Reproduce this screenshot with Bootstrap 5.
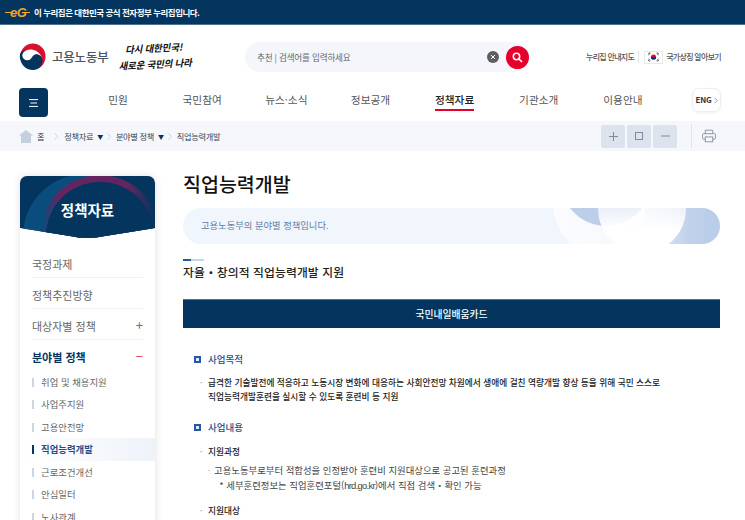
<!DOCTYPE html>
<html lang="ko">
<head>
  <meta charset="UTF-8" />
  <meta name="viewport" content="width=device-width, initial-scale=1.0" />
  <title>직업능력개발 | 고용노동부</title>
  <link href="https://cdn.jsdelivr.net/npm/bootstrap@5.3.0/dist/css/bootstrap.min.css" rel="stylesheet" />
  <style>
    html, body { height: 520px; overflow: hidden; }
    body {
      font-family: "Noto Sans CJK KR", "Noto Sans", sans-serif;
      color: #222;
      background: #fff;
      letter-spacing: -0.2px;
    }
    .gov-bar {
      height: 25px;
      background: #03355f;
      border-bottom: 1px solid #4d7193;
      padding-left: 5px;
      color: #fff;
      font-size: 8.5px;
      font-weight: 700;
      letter-spacing: -0.5px;
    }
    .top-head { height: 63px; padding: 18px 24px 0 19px; }
    .ministry { font-size: 12.5px; color: #4b5560; font-weight: 500; letter-spacing: -0.2px; margin-left: 6px; width: 56px; white-space: nowrap; }
    .slogan {
      width: 72px;
      margin: -3px 0 0 10px;
      font-size: 9.5px;
      line-height: 16px;
      font-weight: 700;
      font-style: italic;
      color: #111;
      text-align: center;
      white-space: nowrap;
      transform: rotate(-3deg);
    }
    .search-box {
      width: 284px;
      height: 30px;
      margin-left: 55px;
      padding: 0 0 0 12px;
      background: #f4f6fb;
      border-radius: 15px;
      font-size: 8.6px;
      color: #666;
    }
    .clear-btn { width: 12px; height: 12px; background: #5e5e5e; border-radius: 50%; margin-right: 7px; }
    .find-btn { width: 23px; height: 23px; background: #e4002b; border-radius: 50%; margin-right: 0; }
    .util-links { font-size: 8px; font-weight: 500; color: #555; letter-spacing: -0.7px; white-space: nowrap; }
    .util-sep { width: 1px; height: 12px; background: #e4e6ea; margin: 0 5px 0 4px; }
    .flag-box { width: 19px; height: 13px; border: 1px solid #e8e8e8; margin-right: 3px; }
    .nav-row { height: 33px; padding: 0 24px 0 19px; }
    .menu-btn { width: 29px; height: 29px; background: #03355f; border-radius: 4px; flex: none; }
    .main-nav { width: 589px; margin-left: 28px; margin-right: 27px; }
    .main-nav a {
      flex: 1 1 0;
      text-align: center;
      font-size: 10.7px;
      color: #555;
      text-decoration: none;
      letter-spacing: 0;
    }
    .main-nav a span { display: inline-block; height: 23px; line-height: 23px; }
    .main-nav a.on span { color: #222; font-weight: 500; border-bottom: 2px solid #e4002b; }
    .eng-btn {
      width: 29px;
      height: 24px;
      border: 1px solid #eee;
      border-radius: 7px;
      font-size: 8px;
      font-weight: 700;
      color: #333;
      box-shadow: 0 1px 3px rgba(0, 0, 0, .06);
    }
    .crumb-bar {
      height: 30px;
      background: #f5f7fb;
      padding: 0 29px 0 19px;
      font-size: 8.2px;
      color: #39434e;
      letter-spacing: -0.3px;
      white-space: nowrap;
    }
    .crumb-arrow { flex: none; margin: 0 5px 0 4px; }
    .crumb-tri { font-size: 6px; color: #03355f; margin-left: 4px; }
    .zoom-btn { width: 24px; height: 23px; background: #dde3ec; border-radius: 2px; margin-left: 2px; }
    .crumb-sep { width: 1px; height: 24px; background: #e2e6ec; margin: 0 10px 0 14px; }
    .page-wrap { padding: 25px 25px 0 20px; gap: 28px; }
    .side-box {
      width: 135px;
      flex: none;
      background: #fff;
      border-radius: 7px 7px 0 0;
      box-shadow: 0 0 8px rgba(0, 0, 0, .12);
      height: 400px;
    }
    .side-head { height: 62px; position: relative; color: #fff; font-size: 14.5px; font-weight: 700; padding-top: 23px; text-align: center; letter-spacing: 0; }
    .side-head svg { position: absolute; left: 0; top: 0; }
    .side-head span { position: relative; }
    .side-list { padding: 9px 0 0; }
    .side-one {
      margin: 0 12px;
      height: 31px;
      padding-top: 7px;
      font-size: 11px;
      color: #666;
      letter-spacing: 0;
      border-bottom: 1px solid #eff1f4;
      line-height: 20px;
    }
    .side-one.open { border: 0; color: #03355f; font-weight: 700; }
    .side-sub {
      height: 22.5px;
      line-height: 22px;
      padding-left: 12px;
      font-size: 9.4px;
      color: #666;
      letter-spacing: 0;
    }
    .side-sub i { display: inline-block; width: 2px; height: 9px; background: #ccd6e3; margin-right: 7px; vertical-align: -1px; }
    .side-sub.cur { background: linear-gradient(90deg, #fff, #eef3fa); color: #1d4f8c; font-weight: 700; }
    .side-sub.cur i { background: #03355f; }
    .page-main { flex: 1 1 0; min-width: 0; }
    .page-title { font-size: 19.5px; font-weight: 500; color: #111; line-height: 32px; margin: -8px 0 8px; letter-spacing: 0; }
    .intro-band {
      position: relative;
      height: 36px;
      border-radius: 18px;
      overflow: hidden;
      background: #f1f5fc;
      font-size: 9.3px;
      line-height: 34px;
      padding-left: 18px;
      color: #5e7ea6;
      letter-spacing: 0;
    }
    .intro-band svg { position: absolute; right: 0; top: 0; }
    .sec-mark { width: 21px; height: 2px; background: #c5d5ec; margin-top: 15px; }
    .sec-mark i { display: block; width: 8px; height: 2px; background: #2459a8; }
    .sec-title { font-size: 11.8px; font-weight: 500; color: #222; line-height: 18px; margin: 2px 0 18px; letter-spacing: 0.1px; }
    .navy-title {
      height: 29px;
      background: #03355f;
      border-top: 1px solid #4d7193;
      color: #fff;
      font-size: 9.8px;
      font-weight: 500;
      line-height: 28px;
      text-align: center;
      letter-spacing: 0;
    }
    .sq-title { font-size: 9.5px; font-weight: 500; color: #1d4f8c; line-height: 16px; margin-left: 11px; letter-spacing: 0; }
    .sq-title i { display: inline-block; width: 7px; height: 7px; border: 2px solid #2459a8; background: #dfe9f7; margin-right: 7px; }
    .body-lines { position: relative; padding-left: 25px; font-size: 8.7px; line-height: 14px; letter-spacing: 0; }
    .dot-mark { position: absolute; font-size: 8px; color: #999; left: 17px; }
    .body-strong { font-weight: 500; color: #222; }
    .body-plain { color: #444; font-size: 9.4px; }
    .latin-tight { font-family: "Liberation Sans", sans-serif; letter-spacing: -0.7px; }
  </style>
</head>
<body>
  <div class="gov-bar d-flex align-items-center gap-1">
    <svg width="25" height="14" viewBox="0 0 25 14" fill="none" aria-hidden="true">
      <path d="M0 7.5H7M17 7.5H25" stroke="#f0a52b" stroke-width="1.2"/>
      <text x="5" y="11.5" font-family="Liberation Sans, sans-serif" font-size="13" font-style="italic" font-weight="700" fill="#f0a52b">eG</text>
    </svg>
    <span>이 누리집은 대한민국 공식 전자정부 누리집입니다.</span>
  </div>

  <div class="top-head d-flex align-items-start">
    <svg class="flex-none" width="27" height="27" viewBox="0 0 27 27" aria-hidden="true">
      <circle cx="13.5" cy="13.5" r="13.5" fill="#fff"/>
      <path d="M1 17C0 9 5 1 13.5 0.6C21 0.6 27 6.5 26.6 14C26 20 23 24 19 25.5C23 21.5 24.2 16.5 21.5 12C18.5 7.5 12.5 5 7 7.5C3.5 9.5 1.5 13 1 17Z" fill="#d8112d"/>
      <path d="M0.8 13C1 21 6.5 27 14 27C20 27 24 22 23.5 17C23 12.6 19 10.3 15.5 11.7C13 13 12.5 16.3 10 17C7 18 4 16 3.5 13.5C2.8 10.5 5 7.5 7 6.5C3.5 7.7 0.8 9.5 0.8 13Z" fill="#03355f"/>
    </svg>
    <div class="ministry" style="line-height:27px">고용노동부</div>
    <div class="slogan">다시 대한민국!<br>새로운 국민의 나라</div>
    <div class="search-box d-flex align-items-center" style="margin-top:-1px">
      <span class="flex-grow-1">추천 | 검색어를 입력하세요</span>
      <span class="clear-btn d-flex align-items-center justify-content-center">
        <svg width="6" height="6" viewBox="0 0 6 6" aria-hidden="true"><path d="M1 1L5 5M5 1L1 5" stroke="#fff" stroke-width="1"/></svg>
      </span>
      <span class="find-btn d-flex align-items-center justify-content-center">
        <svg width="11" height="11" viewBox="0 0 11 11" fill="none" aria-hidden="true"><circle cx="4.5" cy="4.5" r="3.2" stroke="#fff" stroke-width="1.5"/><path d="M7 7L10 10" stroke="#fff" stroke-width="1.6"/></svg>
      </span>
    </div>
    <div class="util-links d-flex align-items-center ms-auto" style="height:28px">
      <span>누리집 안내지도</span>
      <span class="util-sep"></span>
      <span class="flag-box d-flex align-items-center justify-content-center">
        <svg width="13" height="10" viewBox="0 0 13 10" aria-hidden="true">
          <circle cx="6.5" cy="5" r="2.6" fill="#d8112d"/><path d="M3.9 5a2.6 2.6 0 0 0 5.2 0z" fill="#03358f"/>
          <path d="M1 2L3 .6M1.5 3L3.4 1.4M10 .6L12 2M9.6 1.4L11.5 3M1 8L3 9.4M1.5 7L3.4 8.6M10 9.4L12 8M9.6 8.6L11.5 7" stroke="#222" stroke-width=".7"/>
        </svg>
      </span>
      <span>국가상징 알아보기</span>
    </div>
  </div>

  <div class="nav-row d-flex align-items-start">
    <div class="menu-btn d-flex align-items-center justify-content-center">
      <svg width="9" height="8" viewBox="0 0 9 8" aria-hidden="true"><path d="M0 .6H9M1.5 4H8M0 7.4H9" stroke="#fff" stroke-width="1"/></svg>
    </div>
    <nav class="main-nav d-flex">
      <a href="#"><span>민원</span></a>
      <a href="#"><span>국민참여</span></a>
      <a href="#"><span>뉴스·소식</span></a>
      <a href="#"><span>정보공개</span></a>
      <a href="#" class="on"><span>정책자료</span></a>
      <a href="#"><span>기관소개</span></a>
      <a href="#"><span>이용안내</span></a>
    </nav>
    <div class="eng-btn d-flex align-items-center justify-content-center">ENG&nbsp;<svg width="4" height="7" viewBox="0 0 4 7" fill="none" aria-hidden="true"><path d="M.6 .8L3.2 3.5L.6 6.2" stroke="#888" stroke-width=".8"/></svg></div>
  </div>

  <div class="crumb-bar d-flex align-items-center">
    <svg width="14" height="13" viewBox="0 0 14 13" aria-hidden="true"><path d="M7 0L14 5.6H12V13H2V5.6H0Z" fill="#c6d0dc"/></svg>
    <span style="margin-left:4px">홈</span>
    <svg class="crumb-arrow" style="margin-left:10px;margin-right:6px" width="4" height="7" viewBox="0 0 4 7" fill="none" aria-hidden="true"><path d="M.5 .5L3.5 3.5L.5 6.5" stroke="#c3cad4" stroke-width=".8"/></svg>
    <span>정책자료</span><span class="crumb-tri">▼</span>
    <svg class="crumb-arrow" width="4" height="7" viewBox="0 0 4 7" fill="none" aria-hidden="true"><path d="M.5 .5L3.5 3.5L.5 6.5" stroke="#c3cad4" stroke-width=".8"/></svg>
    <span>분야별 정책</span><span class="crumb-tri">▼</span>
    <svg class="crumb-arrow" width="4" height="7" viewBox="0 0 4 7" fill="none" aria-hidden="true"><path d="M.5 .5L3.5 3.5L.5 6.5" stroke="#c3cad4" stroke-width=".8"/></svg>
    <span>직업능력개발</span>
    <div class="d-flex align-items-center ms-auto">
      <span class="zoom-btn d-flex align-items-center justify-content-center"><svg width="9" height="9" viewBox="0 0 9 9" aria-hidden="true"><path d="M0 4.5H9M4.5 0V9" stroke="#7f8b99" stroke-width="1"/></svg></span>
      <span class="zoom-btn d-flex align-items-center justify-content-center"><svg width="8" height="8" viewBox="0 0 8 8" fill="none" aria-hidden="true"><rect x=".5" y=".5" width="7" height="7" stroke="#7f8b99"/></svg></span>
      <span class="zoom-btn d-flex align-items-center justify-content-center"><svg width="9" height="2" viewBox="0 0 9 2" aria-hidden="true"><path d="M0 1H9" stroke="#7f8b99" stroke-width="1"/></svg></span>
      <span class="crumb-sep"></span>
      <svg width="14" height="14" viewBox="0 0 15 14" fill="none" stroke="#8593a3" stroke-width="1" aria-hidden="true">
        <path d="M3.5 4.5V.8H11.5V4.5"/><path d="M3.5 10.5H1.5C1 10.5.6 10 .6 9.5V5.5C.6 5 1 4.5 1.5 4.5H13.5C14 4.5 14.4 5 14.4 5.5V9.5C14.4 10 14 10.5 13.5 10.5H11.5"/><rect x="3.5" y="8" width="8" height="5.2"/>
      </svg>
    </div>
  </div>

  <div class="page-wrap d-flex align-items-start">
    <aside class="side-box">
      <div class="side-head">
        <svg width="135" height="62" viewBox="0 0 135 62" aria-hidden="true">
          <defs>
            <clipPath id="sideClip"><path d="M0 7A7 7 0 0 1 7 0H128A7 7 0 0 1 135 7V52L85 60Q67 64 50 60L0 52Z"/></clipPath>
            <linearGradient id="rimPurple" x1=".05" y1=".72" x2="1" y2=".6"><stop offset="0" stop-color="#0a4c7c"/><stop offset=".18" stop-color="#642560"/><stop offset=".8" stop-color="#622560"/><stop offset="1" stop-color="#03355f"/></linearGradient>
          </defs>
          <g clip-path="url(#sideClip)">
            <rect width="135" height="64" fill="#03355f"/>
            <circle cx="65" cy="60" r="62" fill="#0a4c7c"/>
            <circle cx="80" cy="58" r="59" fill="url(#rimPurple)"/>
            <circle cx="80" cy="60" r="54" fill="#03355f"/>
          </g>
        </svg>
        <span>정책자료</span>
      </div>
      <div class="side-list">
        <div class="side-one">국정과제</div>
        <div class="side-one">정책추진방향</div>
        <div class="side-one d-flex justify-content-between">대상자별 정책 <span style="color:#5c7391;font-size:13px;line-height:18px">+</span></div>
        <div class="side-one open d-flex justify-content-between" style="height:30.5px">분야별 정책 <span style="color:#e8415d;font-size:13px;line-height:18px;font-weight:400">−</span></div>
        <div class="side-sub"><i></i>취업 및 채용지원</div>
        <div class="side-sub"><i></i>사업주지원</div>
        <div class="side-sub"><i></i>고용안전망</div>
        <div class="side-sub cur"><i></i>직업능력개발</div>
        <div class="side-sub"><i></i>근로조건개선</div>
        <div class="side-sub"><i></i>안심일터</div>
        <div class="side-sub"><i></i>노사관계</div>
      </div>
    </aside>

    <main class="page-main">
      <h1 class="page-title">직업능력개발</h1>
      <div class="intro-band">
        고용노동부의 분야별 정책입니다.
        <svg width="200" height="36" viewBox="0 0 200 36" aria-hidden="true">
          <defs>
            <linearGradient id="faintWhite" x1="0" y1="0" x2="1" y2="0"><stop offset="0" stop-color="#fff" stop-opacity=".7"/><stop offset="1" stop-color="#fff" stop-opacity=".2"/></linearGradient>
            <linearGradient id="bandBlue" x1="0" y1="0" x2="1" y2="0"><stop offset="0" stop-color="#e6edf8"/><stop offset=".6" stop-color="#bfd1ea"/><stop offset="1" stop-color="#b9cce8"/></linearGradient>
            <linearGradient id="liteCircle" x1="0" y1="0" x2="0" y2="1"><stop offset=".2" stop-color="#fff" stop-opacity=".35"/><stop offset=".75" stop-color="#fff" stop-opacity="1"/></linearGradient>
          </defs>
          <circle cx="88" cy="-5" r="55" fill="url(#faintWhite)"/>
          <rect x="125" width="75" height="36" fill="url(#bandBlue)"/>
          <circle cx="86" cy="-27" r="45" fill="#bccfe9"/>
          <circle cx="122" cy="1" r="44" fill="url(#liteCircle)"/>
        </svg>
      </div>
      <div class="sec-mark"><i></i></div>
      <h2 class="sec-title">자율・창의적 직업능력개발 지원</h2>
      <div class="navy-title">국민내일배움카드</div>

      <div class="sq-title" style="margin-top:23px"><i></i>사업목적</div>
      <div class="body-lines body-strong" style="margin-top:9px">
        <span class="dot-mark">·</span>급격한 기술발전에 적응하고 노동시장 변화에 대응하는 사회안전망 차원에서 생애에 걸친 역량개발 향상 등을 위해 국민 스스로<br>직업능력개발훈련을 실시할 수 있도록 훈련비 등 지원
      </div>
      <div class="sq-title" style="margin-top:15px"><i></i>사업내용</div>
      <div class="body-lines body-strong" style="margin-top:10px"><span class="dot-mark">·</span>지원과정</div>
      <div class="body-lines body-plain" style="margin-top:4px;padding-left:31px;line-height:15px">
        <span class="dot-mark" style="left:25px">·</span>고용노동부로부터 적합성을 인정받아 훈련비 지원대상으로 공고된 훈련과정<br>&nbsp;&nbsp;* 세부훈련정보는 직업훈련포털(<span class="latin-tight">hrd.go.kr</span>)에서 직접 검색・확인 가능
      </div>
      <div class="body-lines body-strong" style="margin-top:11px"><span class="dot-mark">·</span>지원대상</div>
    </main>
  </div>

  <script src="https://cdn.jsdelivr.net/npm/bootstrap@5.3.0/dist/js/bootstrap.bundle.min.js"></script>
</body>
</html>
